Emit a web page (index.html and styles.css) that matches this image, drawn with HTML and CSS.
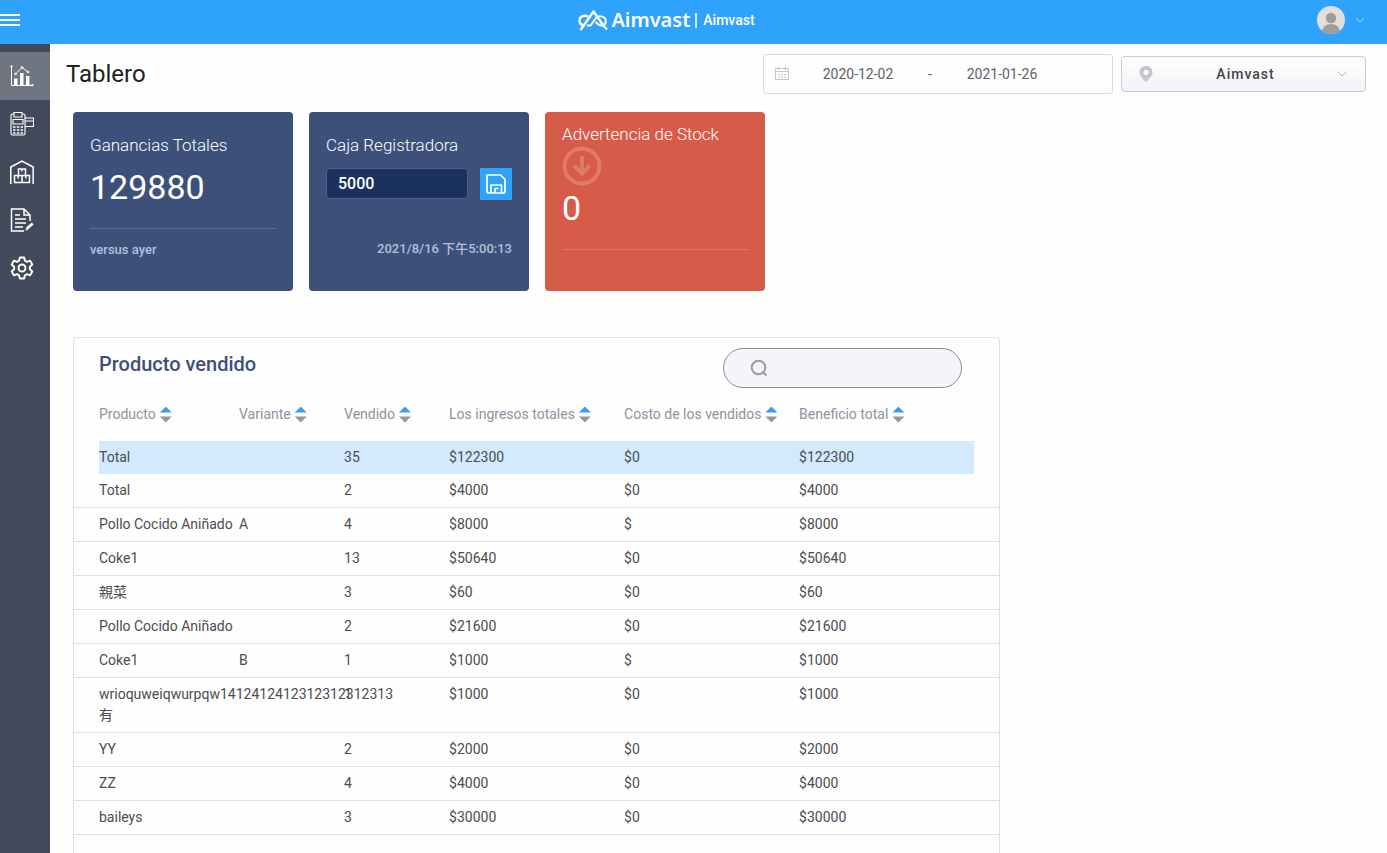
FILE: index.html
```html
<!DOCTYPE html>
<html lang="es">
<head>
<meta charset="utf-8">
<meta name="viewport" content="width=device-width, initial-scale=1">
<title>Tablero | Aimvast</title>
<link rel="stylesheet" href="styles.css">
</head>
<body>
<header class="topbar">
  <button class="menu-toggle" type="button" aria-label="Menú"><span></span><span></span><span></span></button>
  <a class="brand" href="#">
    <svg class="brand-mark" viewBox="0 0 30 22" fill="none" stroke="currentColor" stroke-width="2.4" stroke-linejoin="round" aria-hidden="true">
      <path d="M2.500 21 15.500 2.500 25 16l4 4.500"/>
      <path d="M10 7.500C5.500 5.300 1.500 8 1.500 11.500c0 2.600 1.500 4.200 3.500 4.700"/>
      <path d="M9 16.500h3.500L18 9c3-3.300 9.800-1.500 9.800 3.200 0 4.300-4.100 5.300-7.100 3.400L17.500 13" stroke-width="2"/>
    </svg>
    <span class="brand-name">Aimvast</span>
    <span class="brand-divider"></span>
    <span class="brand-store">Aimvast</span>
  </a>
  <button class="account" type="button" aria-label="Cuenta">
    <svg class="avatar" viewBox="0 0 28 28" aria-hidden="true">
      <clipPath id="avatar-clip"><circle cx="14" cy="14" r="14"/></clipPath>
      <g clip-path="url(#avatar-clip)"><rect width="28" height="28" fill="#e0dfdd"/><circle cx="14" cy="12" r="5.200" fill="#9f9d9a"/><ellipse cx="14" cy="26" rx="9" ry="8" fill="#9f9d9a"/></g>
    </svg>
    <svg class="chevron" viewBox="0 0 10 6" fill="none" stroke="currentColor" aria-hidden="true"><path d="m1 1 4 4 4-4"/></svg>
  </button>
</header>

<div class="shell">
  <nav class="sidebar" aria-label="Principal">
    <a class="nav-item active" href="#" aria-label="Tablero">
      <svg viewBox="0 0 24 24" fill="none" stroke="currentColor" stroke-width="1">
        <path d="M1.500 2v19.500h21"/><circle cx="1.500" cy="2.500" r=".8"/><circle cx="22.500" cy="21" r=".8"/>
        <path d="M5.500 10 12 3.500l6 4.500"/><circle cx="5.500" cy="10" r=".9"/><circle cx="12" cy="3.500" r=".9"/><circle cx="18" cy="8" r=".9"/>
        <path d="M4 14.500h3.500v7H4zM10 9h3.500v12.500H10zM16 12h3.500v9.500H16z" fill="currentColor" stroke="none"/>
      </svg>
    </a>
    <a class="nav-item" href="#" aria-label="Punto de venta">
      <svg viewBox="0 0 24 24" fill="none" stroke="currentColor" stroke-width="1.100">
        <path d="M4 2H2.500Q1 2 1 3.500v18Q1 23 2.500 23h11q1.500 0 1.500-1.500v-18Q15 2 13.500 2H12M4 .5h8V5H4zM3 7.500h10V12H3zM15 6h8.500v8.500H15M15 9h8.500"/>
        <path d="M3 15h2.500M6.800 15h2.500M10.600 15H13M3 18h2.500M6.800 18h2.500M10.600 18H13M3 21h2.500M6.800 21h2.500M10.600 21H13" stroke-width="1.700"/>
      </svg>
    </a>
    <a class="nav-item" href="#" aria-label="Inventario">
      <svg viewBox="0 0 24 24" fill="none" stroke="currentColor" stroke-width="1.500">
        <path d="M.8 24V7L12 1l11.200 6v17M8.500 9h7v6.500h-7zM4.500 15.500H12v7H4.500zM12 15.500h7.500v7H12zM12 9v2.500M8.200 16v2.500M15.800 16v2.500"/>
      </svg>
    </a>
    <a class="nav-item" href="#" aria-label="Informes">
      <svg viewBox="0 0 24 24" fill="none" stroke="currentColor" stroke-width="1.500">
        <path d="M14 23H1.500V1H14l6 6v6M14 1v6h6M5 7h5M5 11h11M5 15h11M5 19h8"/><path d="m15.500 23 1-4L22 14.500l1.500 2-5.500 5z" fill="currentColor" stroke="none"/>
      </svg>
    </a>
    <a class="nav-item" href="#" aria-label="Ajustes">
      <svg viewBox="0 0 24 24" fill="none" stroke="currentColor" stroke-width="1.900" stroke-linejoin="round">
        <path d="m9.800 1.500-.7 3.200-2 1.100L4 4.600 1.700 8.500 4.100 10.800v2.400L1.700 15.500 4 19.400l3.100-1.200 2 1.100.7 3.200h4.400l.7-3.200 2-1.100 3.100 1.200 2.300-3.900-2.400-2.300v-2.400l2.400-2.300L20 4.600l-3.100 1.200-2-1.100-.7-3.200z"/><circle cx="12" cy="12" r="3.500"/>
      </svg>
    </a>
  </nav>

  <main class="main">
    <div class="page-head">
      <h1>Tablero</h1>
      <div class="date-range">
        <svg viewBox="0 0 14 14" fill="none" stroke="currentColor" aria-hidden="true"><path d="M.5 1.500h13v11H.5zM.5 4.500h13M3.500 0v3M10.500 0v3"/><path d="M3 7.500h8M3 10h8" stroke-dasharray="2 1"/></svg>
        <input type="text" value="2020-12-02" aria-label="Fecha inicial">
        <span>-</span>
        <input type="text" value="2021-01-26" aria-label="Fecha final">
      </div>
      <div class="store-select">
        <svg class="pin" viewBox="0 0 14 16" aria-hidden="true"><path fill="currentColor" fill-rule="evenodd" d="M7 0c3.700 0 6.500 2.700 6.500 6.300C13.500 10.200 9 14 7 16 5 14 .5 10.200.5 6.300.5 2.700 3.300 0 7 0zm0 3.800a2.600 2.600 0 1 0 0 5.200 2.600 2.600 0 0 0 0-5.200z"/></svg>
        <select aria-label="Tienda"><option>Aimvast</option></select>
        <svg class="chevron" viewBox="0 0 10 6" fill="none" stroke="currentColor" aria-hidden="true"><path d="m1 1 4 4 4-4"/></svg>
      </div>
    </div>

    <div class="content">
      <section class="cards">
        <article class="card">
          <h2>Ganancias Totales</h2>
          <p class="value">129880</p>
          <hr>
          <p class="note">versus ayer</p>
        </article>
        <article class="card">
          <h2><label for="cash">Caja Registradora</label></h2>
          <form class="cash-form">
            <input id="cash" type="text" value="5000">
            <button type="button" aria-label="Guardar">
              <svg viewBox="0 0 20 20" fill="none" stroke="currentColor" stroke-width="1.700" stroke-linejoin="round" aria-hidden="true"><path d="M1 1h13.500L19 5.500V17q0 2-2 2H3q-2 0-2-2zM5 19v-8h10.500v8M9 19v-4.500h3.500"/></svg>
            </button>
          </form>
          <p class="note stamp">2021/8/16 下午5:00:13</p>
        </article>
        <article class="card warning">
          <h2>Advertencia de Stock</h2>
          <svg class="down" viewBox="0 0 40 40" fill="none" stroke="currentColor" stroke-width="4" aria-hidden="true"><circle cx="20" cy="20" r="17.500"/><path d="M20 10v18M12 19.500l8 8 8-8"/></svg>
          <p class="value">0</p>
          <hr>
        </article>
      </section>

      <section class="panel">
        <div class="panel-head">
          <h2>Producto vendido</h2>
          <label class="search">
            <svg viewBox="0 0 18 18" fill="none" stroke="currentColor" stroke-width="2" aria-hidden="true"><circle cx="8.500" cy="8.500" r="6.800"/><path d="m12.500 12.500 4 4"/></svg>
            <input type="search" aria-label="Buscar producto">
          </label>
        </div>
        <table>
          <colgroup><col class="c-product"><col class="c-small"><col class="c-small"><col class="c-money"><col class="c-money"><col class="c-last"></colgroup>
          <thead>
            <tr>
              <th scope="col"><button class="sort" type="button">Producto</button></th>
              <th scope="col"><button class="sort" type="button">Variante</button></th>
              <th scope="col"><button class="sort" type="button">Vendido</button></th>
              <th scope="col"><button class="sort" type="button">Los ingresos totales</button></th>
              <th scope="col"><button class="sort" type="button">Costo de los vendidos</button></th>
              <th scope="col"><button class="sort" type="button">Beneficio total</button></th>
            </tr>
          </thead>
          <tbody>
            <tr class="summary"><td>Total</td><td></td><td>35</td><td>$122300</td><td>$0</td><td>$122300</td></tr>
            <tr><td>Total</td><td></td><td>2</td><td>$4000</td><td>$0</td><td>$4000</td></tr>
            <tr><td>Pollo Cocido Aniñado</td><td>A</td><td>4</td><td>$8000</td><td>$</td><td>$8000</td></tr>
            <tr><td>Coke1</td><td></td><td>13</td><td>$50640</td><td>$0</td><td>$50640</td></tr>
            <tr><td>親菜</td><td></td><td>3</td><td>$60</td><td>$0</td><td>$60</td></tr>
            <tr><td>Pollo Cocido Aniñado</td><td></td><td>2</td><td>$21600</td><td>$0</td><td>$21600</td></tr>
            <tr><td>Coke1</td><td>B</td><td>1</td><td>$1000</td><td>$</td><td>$1000</td></tr>
            <tr><td>wrioquweiqwurpqw1412412412312312312313 有</td><td></td><td>1</td><td>$1000</td><td>$0</td><td>$1000</td></tr>
            <tr><td>YY</td><td></td><td>2</td><td>$2000</td><td>$0</td><td>$2000</td></tr>
            <tr><td>ZZ</td><td></td><td>4</td><td>$4000</td><td>$0</td><td>$4000</td></tr>
            <tr><td>baileys</td><td></td><td>3</td><td>$30000</td><td>$0</td><td>$30000</td></tr>
          </tbody>
        </table>
      </section>
    </div>
  </main>
</div>
</body>
</html>
```

FILE: styles.css
```css
* { box-sizing: border-box; }

body {
  display: flex;
  flex-direction: column;
  height: 100vh;
  margin: 0;
  overflow: hidden;
  background: #fefefe;
  color: #4a4d53;
  font: 14px/21px Roboto, "Noto Sans CJK TC", sans-serif;
}

h1, h2, p { margin: 0; }
button, input, select { font: inherit; color: inherit; }
button { padding: 0; border: 0; background: none; cursor: pointer; }
svg { display: block; flex: none; }

/* Top bar */
.topbar {
  display: grid;
  grid-template-columns: 1fr auto 1fr;
  align-items: center;
  flex: none;
  height: 44px;
  padding-bottom: 4px;
  background: #2fa2fb;
  color: #fff;
}
.menu-toggle { display: grid; gap: 3px; width: 20px; }
.menu-toggle span { height: 2px; background: #fff; }
.brand {
  display: flex;
  align-items: center;
  height: 40px;
  padding-right: 54px;
  color: #fff;
  text-decoration: none;
}
.brand-mark { width: 30px; height: 22px; margin-right: 3px; }
.brand-name { font: 600 20px/24px "Noto Sans", sans-serif; }
.brand-divider { width: 2px; height: 15px; margin: 0 6px 0 5px; background: #d5edff; }
.brand-store { font-weight: 500; }
.account { display: flex; align-items: center; gap: 10px; justify-self: end; margin-right: 22px; }
.avatar { width: 28px; height: 28px; }
.chevron { width: 10px; height: 6px; }
.account .chevron { color: #9bd2ff; }

/* Side navigation */
.shell { display: flex; flex: 1; min-height: 0; }
.sidebar { flex: none; width: 50px; padding-top: 8px; background: #42495b; }
.nav-item {
  display: flex;
  align-items: center;
  height: 48px;
  padding-left: 10px;
  color: #fff;
}
.nav-item.active { background: #707681; }
.nav-item svg { width: 24px; height: 24px; }

/* Page heading */
.main { display: flex; flex-direction: column; flex: 1; min-width: 0; }
.page-head { display: flex; align-items: center; gap: 8px; padding: 10px 21px 18px 16px; }
h1 { margin-right: auto; color: #212121; font-size: 24px; font-weight: 400; line-height: 40px; }
.date-range {
  display: flex;
  align-items: center;
  width: 350px;
  height: 40px;
  padding: 0 11px;
  border: 1px solid #dcdcdf;
  border-radius: 3px;
  color: #606266;
}
.date-range svg { width: 14px; height: 14px; margin-right: 1px; color: #c5c8cb; }
.date-range input {
  width: 136px;
  padding: 0;
  border: 0;
  background: none;
  text-align: center;
}
.date-range span { width: 8px; text-align: center; }
.store-select { position: relative; width: 245px; }
.store-select select {
  appearance: none;
  width: 100%;
  height: 36px;
  padding: 0 36px 0 40px;
  border: 1px solid #c9c9d1;
  border-radius: 4px;
  background: linear-gradient(#fff, #f2f2f8);
  color: #43464b;
  font-weight: 500;
  letter-spacing: 1px;
  text-align-last: center;
}
.store-select svg { position: absolute; top: 0; bottom: 0; margin: auto; pointer-events: none; }
.store-select .pin { left: 18px; width: 14px; height: 16px; color: #c5c5c9; }
.store-select .chevron { right: 19px; color: #b8b8be; }

/* Summary cards */
.content { display: flex; flex-direction: column; flex: 1; gap: 46px; min-height: 0; padding: 0 16px 0 23px; }
.cards { display: flex; flex: none; gap: 16px; }
.card {
  width: 220px;
  height: 179px;
  padding: 23px 17px 0;
  border-radius: 4px;
  background: #3d507a;
  color: #fff;
}
.card h2 { font-size: 17px; font-weight: 300; line-height: 20px; }
.card .value { margin-top: 12px; font-size: 34px; line-height: 40px; }
.card hr { height: 1px; margin: 21px 0 11px; border: 0; background: #5d6e96; }
.note { color: #b3c0dc; font-size: 13px; font-weight: 500; line-height: 20px; }
.stamp { margin-top: 39px; text-align: right; }
.cash-form { display: flex; justify-content: space-between; margin-top: 13px; }
.cash-form input {
  width: 142px;
  height: 31px;
  padding: 0 11px;
  border: 1px solid #4d6190;
  border-radius: 4px;
  background: #1b315f;
  font-size: 16px;
  font-weight: 500;
}
.cash-form button { display: grid; place-items: center; width: 32px; height: 32px; background: #2fa2fb; }
.cash-form svg { width: 20px; height: 20px; }
.card.warning { padding-top: 12px; background: #d65b48; }
.warning .down { width: 40px; height: 40px; margin-top: 2px; color: #e17b66; }
.warning .value { margin-top: 2px; }
.warning hr { background: #e37563; }

/* Sold products */
.panel {
  flex: 1;
  width: calc(100% * 5 / 7);
  min-height: 0;
  overflow: hidden;
  border: 1px solid #dedfe3;
  border-bottom: 0;
  border-radius: 4px 4px 0 0;
}
.panel-head { display: flex; justify-content: space-between; padding: 10px 37px 0 25px; }
.panel-head h2 { color: #3d507a; font-size: 20px; font-weight: 500; line-height: 32px; }
.search {
  display: flex;
  align-items: center;
  gap: 12px;
  width: 239px;
  height: 40px;
  padding: 0 20px 0 26px;
  border: 1px solid #8f8d92;
  border-radius: 20px;
  background: #f6f4f8;
}
.search svg { width: 18px; height: 18px; color: #9b9a9d; }
.search input { flex: 1; min-width: 0; border: 0; background: none; }

table { width: 100%; table-layout: fixed; border-spacing: 0; }
.c-product { width: 165px; }
.c-small { width: 105px; }
.c-money { width: 175px; }
.c-last { width: 200px; }
th { height: 53px; padding: 0; text-align: left; font-weight: 400; }
th:first-child { padding-left: 25px; }
.sort { display: flex; align-items: center; gap: 4px; color: #8d93a1; white-space: nowrap; }
.sort::after {
  content: "";
  width: 12px;
  height: 16px;
  background: linear-gradient(#3d9cec 50%, #96979a 50%);
  clip-path: polygon(50% 0, 100% 6px, 100% 6px, 0 6px, 0 10px, 100% 10px, 50% 100%, 0 10px, 0 6px);
}
td {
  padding: 6px 0;
  border-bottom: 1px solid #dedfe3;
  vertical-align: top;
}
td:first-child { padding-left: 25px; }
.summary td { border-bottom: 0; background: #d2e9fe; background-clip: padding-box; }
.summary td:first-child { padding-left: 0; border-left: 25px solid transparent; }
.summary td:last-child { border-right: 25px solid transparent; }
```
